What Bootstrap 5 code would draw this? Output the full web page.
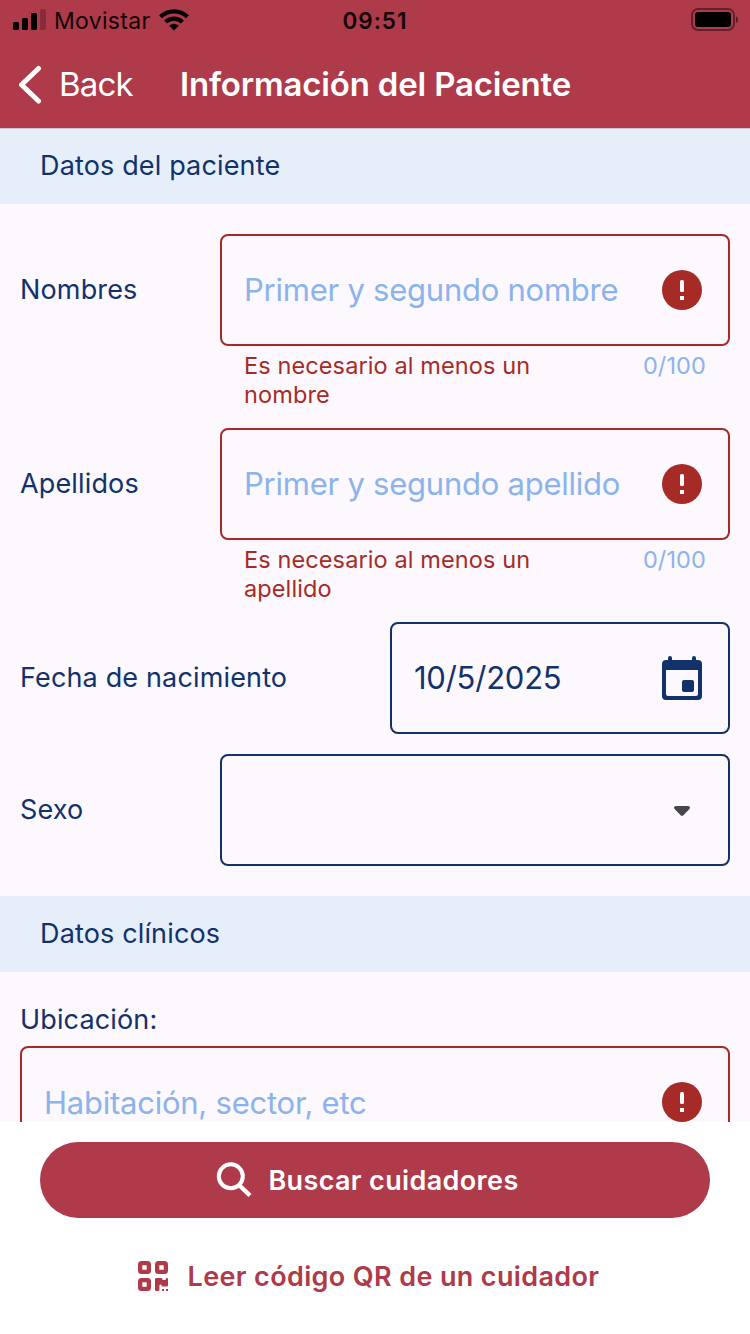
<!DOCTYPE html>
<html lang="es">
<head>
<meta charset="utf-8">
<meta name="viewport" content="width=device-width, initial-scale=1">
<title>Información del Paciente</title>
<link href="https://cdn.jsdelivr.net/npm/bootstrap@5.3.0/dist/css/bootstrap.min.css" rel="stylesheet">
<style>
:root{--brand:#ae3a4a;--navy:#11326b;--err:#a62b27;--hint:#8bb3ec;--surface:#fcf8fd}
body{font-family:Inter,"Liberation Sans",sans-serif;color:var(--navy);height:1334px;background:#fff;font-size:27px;line-height:1.2;letter-spacing:.15px}
svg{display:block;flex-shrink:0}
.app-head{background:var(--brand);height:128px}
.status-bar{height:40px;color:#120306;font-size:23px;padding:0 12px}
.carrier{margin-left:8px;padding-top:3px;letter-spacing:.3px}
.wifi{margin-left:9px}
.clock{font-weight:600;left:0;right:0;text-align:center;top:7px;font-size:22.5px;letter-spacing:1px}
.title-bar{height:88px;color:#fff;padding-top:1px}
.back-text{font-size:33px;margin-left:17px;width:121px;letter-spacing:-.8px}
.title-text{font-size:33px;font-weight:600;letter-spacing:-.18px}
.screen-body{background:var(--surface);height:994px}
.section-head{background:#e6eefa;height:76px;padding:0 40px}
.section-head:first-child{box-shadow:inset 0 1px #cfc4d2}
.form-area{padding:30px 20px}
.f-label{height:112px}
.field{height:112px;border:2px solid var(--navy);border-radius:8px;padding:0 26px 0 22px;font-size:31px;letter-spacing:-.24px}
.field.bad{border-color:var(--err)}
.w-field{width:510px}
.w-date{width:340px}
.sex-row{margin-top:20px}
.caret{margin:2px 12px 0 0}
.loc{padding-top:2px;margin-bottom:10px}
.hint{color:var(--hint)}
.help{height:82px;padding:5px 24px 0;font-size:23.5px;line-height:29px;color:var(--err);letter-spacing:.11px}
.help-text{width:320px}
.foot{background:#fff;height:212px;padding:20px 40px}
.foot .btn{height:76px;font-size:27px;font-weight:600;letter-spacing:.36px;border:0}
.foot .btn span{padding-top:2px}
.btn-brand,.btn-brand:hover{background:var(--brand);color:#fff}
.btn-plain{color:var(--brand);margin-top:20px}
.foot-label{margin:0 15px 0 16px}
.foot-label-wide{margin:0 13px 0 19px}
</style>
</head>
<body class="overflow-hidden">
<svg class="d-none"><symbol id="alert" viewBox="0 0 40 40"><circle cx="20" cy="20" r="20" fill="#a62b27"/><rect x="18" y="10" width="4" height="12" rx="1.6" fill="#fff"/><rect x="18" y="26" width="4" height="4" fill="#fff"/></symbol></svg>
<header class="app-head">
  <div class="status-bar d-flex align-items-center position-relative">
    <svg width="34" height="22" viewBox="0 0 34 22"><g fill="#000"><rect x="1" y="13" width="6" height="8" rx="1.6"/><rect x="10" y="9" width="6" height="12" rx="1.6"/><rect x="19" y="4" width="6" height="17" rx="1.6"/><rect x="28" y="0" width="6" height="21" rx="1.6" opacity=".22"/></g></svg>
    <span class="carrier">Movistar</span>
    <svg class="wifi" width="30" height="22" viewBox="0 0 30 22"><g fill="none" stroke="#000" stroke-width="4.2"><path d="M1.5 7.8a19.4 19.4 0 0 1 27 0"/><path d="M6.6 13a12.2 12.2 0 0 1 16.8 0"/></g><path d="M10.2 16.7a7 7 0 0 1 9.6 0L15 21.6z"/></svg>
    <span class="clock position-absolute">09:51</span>
    <svg class="ms-auto" width="47" height="24" viewBox="0 0 47 24"><rect x="1" y="1" width="42" height="21" rx="6" fill="none" stroke="#000" stroke-opacity=".42" stroke-width="2"/><rect x="4" y="4" width="36" height="15" rx="3"/><path d="M45 8v7q2-1 2-3.5t-2-3.5z" opacity=".5"/></svg>
  </div>
  <div class="title-bar d-flex align-items-center">
    <svg class="ms-3" width="26" height="40" viewBox="0 0 26 40"><path d="M22.500 3.500 5.500 19.700l17 16.300" fill="none" stroke="#fff" stroke-width="5" stroke-linecap="round" stroke-linejoin="round"/></svg>
    <span class="back-text">Back</span>
    <span class="title-text">Información del Paciente</span>
  </div>
</header>
<main class="screen-body overflow-hidden">
  <div class="section-head d-flex align-items-center">Datos del paciente</div>
  <div class="form-area">
    <div class="d-flex justify-content-between">
      <label class="f-label d-flex align-items-center">Nombres</label>
      <div class="w-field">
        <div class="field bad d-flex align-items-center justify-content-between"><span class="hint">Primer y segundo nombre</span><svg width="40" height="40"><use href="#alert"/></svg></div>
        <div class="help d-flex justify-content-between"><span class="help-text">Es necesario al menos un nombre</span><span class="hint">0/100</span></div>
      </div>
    </div>
    <div class="d-flex justify-content-between">
      <label class="f-label d-flex align-items-center">Apellidos</label>
      <div class="w-field">
        <div class="field bad d-flex align-items-center justify-content-between"><span class="hint">Primer y segundo apellido</span><svg width="40" height="40"><use href="#alert"/></svg></div>
        <div class="help d-flex justify-content-between"><span class="help-text">Es necesario al menos un apellido</span><span class="hint">0/100</span></div>
      </div>
    </div>
    <div class="d-flex justify-content-between align-items-center">
      <label>Fecha de nacimiento</label>
      <div class="field w-date d-flex align-items-center justify-content-between"><span>10/5/2025</span>
        <svg width="40" height="44" viewBox="0 0 40 44"><path fill="#11326b" fill-rule="evenodd" d="M6 4V2a2 2 0 0 1 4 0v2h20V2a2 2 0 0 1 4 0v2h2a4 4 0 0 1 4 4v32a4 4 0 0 1-4 4H4a4 4 0 0 1-4-4V8a4 4 0 0 1 4-4zM4 14v24a2 2 0 0 0 2 2h28a2 2 0 0 0 2-2V14zM22 24h8a2 2 0 0 1 2 2v8a2 2 0 0 1-2 2h-8a2 2 0 0 1-2-2v-8a2 2 0 0 1 2-2z"/></svg></div>
    </div>
    <div class="d-flex justify-content-between align-items-center sex-row">
      <label>Sexo</label>
      <div class="field w-field d-flex align-items-center justify-content-end"><svg class="caret" width="16" height="10" viewBox="0 0 16 10"><path fill="#49454f" d="M2 0h12q2 0 2 1.500 0 1.200-1 2.100L9.600 9Q8 10.700 6.400 9L1 3.600Q0 2.700 0 1.500 0 0 2 0z"/></svg></div>
    </div>
  </div>
  <div class="section-head d-flex align-items-center">Datos clínicos</div>
  <div class="form-area">
    <label class="d-block loc">Ubicación:</label>
    <div class="field bad d-flex align-items-center justify-content-between"><span class="hint">Habitación, sector, etc</span><svg width="40" height="40"><use href="#alert"/></svg></div>
  </div>
</main>
<footer class="foot">
  <button class="btn btn-brand rounded-pill w-100 p-0 d-flex align-items-center justify-content-center">
    <svg width="36" height="36" viewBox="0 0 36 36" fill="none" stroke="#fff"><circle cx="14.800" cy="14.300" r="12" stroke-width="4"/><path d="M23.500 23.500 34 33.500" stroke-width="4.400"/></svg>
    <span class="foot-label">Buscar cuidadores</span>
  </button>
  <button class="btn btn-plain w-100 p-0 d-flex align-items-center justify-content-center">
    <svg width="31" height="30" viewBox="0 0 31 30" fill="#ae3a4a"><path fill-rule="evenodd" d="M3.500 0h6A3.500 3.500 0 0 1 13 3.500v6A3.500 3.500 0 0 1 9.500 13h-6A3.500 3.500 0 0 1 0 9.500v-6A3.500 3.500 0 0 1 3.500 0zM4.300 4.300v4.400h4.400V4.300zM20.500 0h6A3.500 3.500 0 0 1 30 3.500v6a3.500 3.500 0 0 1-3.500 3.500h-6A3.500 3.500 0 0 1 17 9.500v-6A3.500 3.500 0 0 1 20.500 0zM21.300 4.300v4.400h4.400V4.300zM3.500 17h6a3.500 3.500 0 0 1 3.500 3.500v6A3.500 3.500 0 0 1 9.500 30h-6A3.500 3.500 0 0 1 0 26.500v-6A3.500 3.500 0 0 1 3.500 17zM4.300 21.300v4.400h4.400v-4.400z"/><path d="M18.300 17h5q1 0 1 1.100 0 1 1 1h1.600q1 0 1-1 0-1.100 1.100-1.100t1 1.100v6.200q0 1.200-1.200 1.200h-4q-1.200 0-1.200-1.100 0-1-1-1t-1.200 1v4.400q0 1.200-1.200 1.200h-2q-1.200 0-1.200-1.200V18.200q0-1.200 1.300-1.200zM24 28h2v2h-2zM28 28h2v2h-2z"/></svg>
    <span class="foot-label-wide">Leer código QR de un cuidador</span>
  </button>
</footer>
<script src="https://cdn.jsdelivr.net/npm/bootstrap@5.3.0/dist/js/bootstrap.bundle.min.js"></script>
</body>
</html>
